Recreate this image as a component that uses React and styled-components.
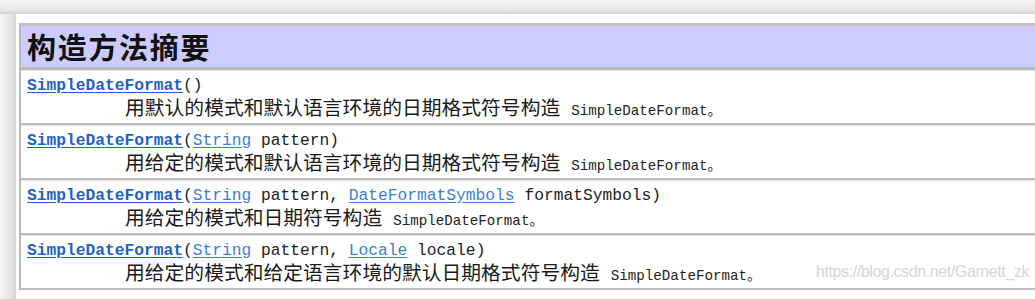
import React from "react";
import styled, { createGlobalStyle } from "styled-components";

const GlobalStyle = createGlobalStyle`
    html, body {
        margin: 0;
        padding: 0;
        overflow: hidden;
        background: #fff;
    }
`

const rows = [
    { params: [], desc: "用默认的模式和默认语言环境的日期格式符号构造" },
    { params: [{ type: "String", name: "pattern" }], desc: "用给定的模式和默认语言环境的日期格式符号构造" },
    {
        params: [
            { type: "String", name: "pattern" },
            { type: "DateFormatSymbols", name: "formatSymbols" },
        ],
        desc: "用给定的模式和日期符号构造",
    },
    {
        params: [
            { type: "String", name: "pattern" },
            { type: "Locale", name: "locale" },
        ],
        desc: "用给定的模式和给定语言环境的默认日期格式符号构造",
    },
]

const Signature = ({ params }) => {
    const parts = params.map((p, i) => (
        <React.Fragment key={i}>
            {i > 0 ? ", " : ""}
            <TypeLink href="#">{p.type}</TypeLink>{" " + p.name}
        </React.Fragment>
    ))
    return (
        <SigLine>
            <CtorLink href="#">SimpleDateFormat</CtorLink>({parts})
        </SigLine>
    )
}

const App = () => {
    return (
        <Screen>
            <GlobalStyle />
            <Sheet>
                <Summary>
                    <HeadCell>构造方法摘要</HeadCell>
                    {rows.map((r, i) => (
                        <Row key={i}>
                            <Signature params={r.params} />
                            <Desc>
                                {r.desc}
                                <Code>SimpleDateFormat。</Code>
                            </Desc>
                        </Row>
                    ))}
                </Summary>
                <Watermark>https://blog.csdn.net/Garnett_zk</Watermark>
            </Sheet>
        </Screen>
    )
}

const Screen = styled.div`
    width: 1035px;
    height: 299px;
    padding: 14px 0 0 16px;
    box-sizing: border-box;
    background:
        linear-gradient(to bottom, #f6f6f6 0%, #e6e6e6 70%, #d4d4d4 100%) top left / 100% 14px no-repeat,
        linear-gradient(to right, #f4f4f4 0%, #e4e4e4 70%, #d2d2d2 100%) top left / 16px 100% no-repeat,
        #fff;
    overflow: hidden;
`

const Sheet = styled.div`
    position: relative;
    height: 100%;
    background: #fff;
    padding: 9px 0 0 3px;
    box-sizing: border-box;
`

const Summary = styled.div`
    width: 1040px;
    display: flex;
    flex-direction: column;
    border-top: 3px solid #c2c2c2;
    border-left: 2px solid #b8b8b8;
`

const HeadCell = styled.div`
    height: 41px;
    padding-left: 6px;
    background: #ccccff;
    border-bottom: 3px solid #bcbcbc;
    font-family: "Noto Sans CJK SC", sans-serif;
    font-weight: 700;
    font-size: 29px;
    letter-spacing: 1.7px;
    line-height: 41px;
    color: #111;
`

const Row = styled.div`
    height: 47px;
    padding: 5px 0 0 6px;
    box-sizing: content-box;
    border-bottom: 2px solid #bdbdbd;
    border-top: 1px solid #e2e2e2;
    display: flex;
    flex-direction: column;
`

const SigLine = styled.div`
    height: 20px;
    font-family: "Liberation Mono", monospace;
    font-size: 16.25px;
    line-height: 20px;
    color: #222;
    white-space: pre;
`

const CtorLink = styled.a`
    color: #1d62c4;
    font-weight: 700;
    text-decoration: underline;
    text-underline-offset: 2px;
`

const TypeLink = styled.a`
    color: #3a7fd6;
    text-decoration: underline;
    text-underline-offset: 2px;
`

const Desc = styled.div`
    margin-left: 98px;
    font-family: "Noto Sans CJK SC", sans-serif;
    font-size: 19.8px;
    line-height: 22px;
    color: #1a1a1a;
    white-space: nowrap;
`

const Code = styled.span`
    margin-left: 11px;
    font-family: "Liberation Mono", "Noto Sans CJK SC", monospace;
    font-size: 14.2px;
    color: #222;
`

const Watermark = styled.div`
    position: absolute;
    left: 800px;
    top: 249px;
    font-family: "Liberation Sans", sans-serif;
    font-size: 16px;
    letter-spacing: -0.4px;
    color: #d6d6d6;
    white-space: nowrap;
`

export default App;
